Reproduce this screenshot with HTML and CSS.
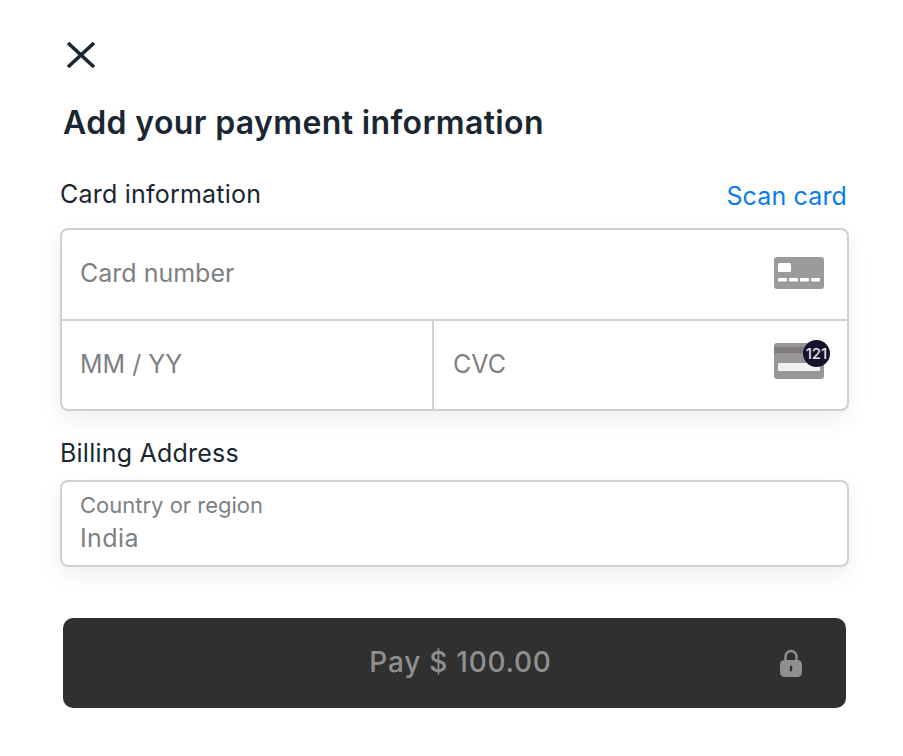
FILE: index.html
```html
<!DOCTYPE html>
<html>
<head>
<meta charset="utf-8">
<title>Add your payment information</title>
<link rel="stylesheet" href="styles.css">
</head>
<body>
<div class="sheet">
	<button class="close" aria-label="Close">
		<svg width="30" height="26" viewBox="0 0 30 26"><path d="M2 1 L28 25 M28 1 L2 25" fill="none" stroke="#1a2733" stroke-width="3.6"/></svg>
	</button>
	<h1 class="title">Add your payment information</h1>

	<div class="labelRow">
		<span class="label">Card information</span>
		<a class="scan">Scan card</a>
	</div>
	<div class="box cardBox">
		<div class="cardRow">
			<span class="hint">Card number</span>
			<svg class="cardIcon" width="50" height="32" viewBox="0 0 50 32">
				<rect width="50" height="32" rx="3" fill="#9b9b9b"/>
				<rect x="4" y="6" width="13" height="9" rx="1.5" fill="#fff"/>
				<rect x="4" y="21" width="9" height="3.5" rx="1" fill="#fff"/>
				<rect x="15" y="21" width="9" height="3.5" rx="1" fill="#fff"/>
				<rect x="26" y="21" width="9" height="3.5" rx="1" fill="#fff"/>
				<rect x="37" y="21" width="9" height="3.5" rx="1" fill="#fff"/>
			</svg>
		</div>
		<div class="splitRow">
			<div class="cell"><span class="hint">MM / YY</span></div>
			<div class="cell cvcCell">
				<span class="hint">CVC</span>
				<div class="cvcIcon">
					<svg width="50" height="36" viewBox="0 0 50 36">
						<rect width="50" height="36" rx="3" fill="#9a9596"/>
						<rect y="4" width="50" height="6" fill="#7f7a7b"/>
						<rect x="4" y="20" width="42" height="8" rx="1" fill="#f1f0f1"/>
					</svg>
					<span class="badge">121</span>
				</div>
			</div>
		</div>
	</div>

	<div class="label billing">Billing Address</div>
	<div class="box countryBox">
		<div class="small">Country or region</div>
		<div class="country">India</div>
	</div>

	<button class="pay">
		<span>Pay $ 100.00</span>
		<svg class="lock" width="24" height="29" viewBox="0 0 24 29">
			<path d="M6.5 14 V7.5 a5.5 5.5 0 0 1 11 0 V14" fill="none" stroke="#8f8f8f" stroke-width="2.4"/>
			<rect x="1" y="11" width="22" height="17" rx="4.5" fill="#8f8f8f"/>
			<rect x="10.8" y="16.5" width="2.4" height="6" rx="1.2" fill="#303030"/>
		</svg>
	</button>
</div>
</body>
</html>
```

FILE: styles.css
```css
body
{
	margin: 0;
	background-color: #fff;
	font-family: Inter, "Noto Sans", sans-serif;
	color: #1a2733;
}
.sheet
{
	width: 903px;
	height: 756px;
	padding: 42px 54px 0 60px;
	box-sizing: border-box;
	overflow: hidden;
}
.close
{
	display: block;
	margin-left: 6px;
	padding: 0;
	border: 0;
	background: none;
	height: 26px;
}
.title
{
	margin: 33px 0 0 3px;
	font-size: 32px;
	line-height: 44px;
	font-weight: 600;
	letter-spacing: .37px;
}
.labelRow
{
	display: flex;
	justify-content: space-between;
	align-items: flex-end;
	margin-top: 32px;
}
.label
{
	font-size: 25px;
	line-height: 34px;
	font-weight: 400;
	letter-spacing: .22px;
}
.scan
{
	font-size: 25px;
	line-height: 34px;
	color: #0a7cec;
	margin-right: 2px;
	letter-spacing: .15px;
	position: relative;
	top: 2px;
}
.box
{
	border: 2px solid #d0d0d0;
	border-radius: 8px;
	background-color: #fff;
	box-shadow: 0 8px 22px rgba(0, 0, 0, .07);
}
.cardBox
{
	margin-top: 17px;
	width: 789px;
	box-sizing: border-box;
}
.cardRow
{
	display: flex;
	justify-content: space-between;
	align-items: center;
	height: 85px;
	padding: 0 23px 4px 18px;
	border-bottom: 2px solid #d0d0d0;
}
.splitRow
{
	display: flex;
	height: 88px;
}
.cell
{
	display: flex;
	align-items: center;
	width: 370px;
	padding: 0 0 2px 18px;
	box-sizing: border-box;
}
.cvcCell
{
	flex: 1;
	justify-content: space-between;
	padding-left: 19px;
	padding-right: 23px;
	border-left: 2px solid #d0d0d0;
}
.hint
{
	font-size: 25px;
	color: #7d8083;
}
.cvcIcon
{
	position: relative;
	width: 50px;
	height: 36px;
	margin-bottom: 6px;
}
.cvcIcon svg
{
	display: block;
}
.badge
{
	position: absolute;
	top: -3px;
	right: -6px;
	width: 27px;
	height: 27px;
	border-radius: 50%;
	background-color: #15122a;
	color: #e4e1ea;
	font-size: 15px;
	font-weight: 500;
	line-height: 27px;
	text-align: center;
}
.billing
{
	margin-top: 25px;
}
.countryBox
{
	margin-top: 10px;
	width: 789px;
	height: 87px;
	box-sizing: border-box;
	padding: 8px 18px 0;
}
.small
{
	font-size: 22px;
	line-height: 31px;
	color: #7d8083;
}
.country
{
	font-size: 25px;
	line-height: 34px;
	color: #7d8083;
	letter-spacing: .4px;
}
.pay
{
	display: flex;
	align-items: center;
	justify-content: center;
	position: relative;
	width: 783px;
	height: 90px;
	margin: 51px 0 0 3px;
	padding: 0 0 2px 12px;
	border: 0;
	border-radius: 10px;
	background-color: #303030;
	color: #8f8f8f;
	font-family: inherit;
	font-size: 28px;
	font-weight: 500;
	letter-spacing: .75px;
}
.lock
{
	position: absolute;
	right: 43px;
	top: 31px;
}
```
